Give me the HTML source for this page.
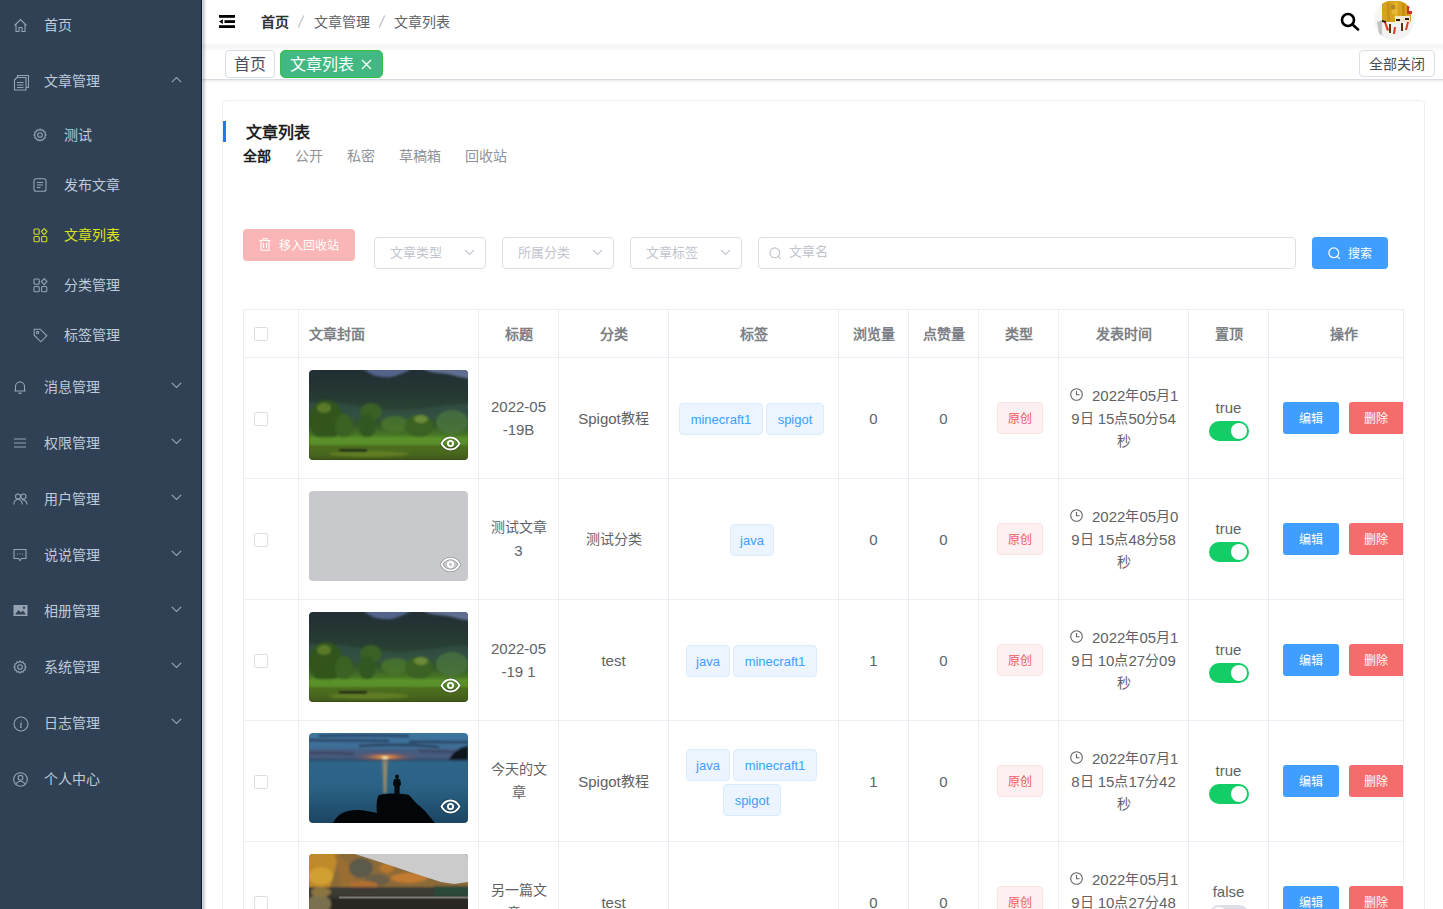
<!DOCTYPE html>
<html lang="zh-CN">
<head>
<meta charset="utf-8">
<style>
*{box-sizing:border-box;margin:0;padding:0}
html,body{width:1443px;height:909px;overflow:hidden;background:#fff}
body{font-family:"Liberation Sans",sans-serif;font-size:14px;color:#606266;position:relative}
.abs{position:absolute}
svg{display:block}
/* sidebar */
#side{position:absolute;left:0;top:0;width:201px;height:909px;background:#304156}
#sideline{position:absolute;left:201px;top:0;width:1px;height:909px;background:#0a1e38}
#sideshadow{position:absolute;left:202px;top:0;width:6px;height:909px;background:linear-gradient(90deg,rgba(0,0,0,.15) 0,rgba(0,0,0,.2) 1.5px,rgba(0,0,0,.12) 2.5px,rgba(0,0,0,.05) 3.5px,rgba(0,0,0,.015) 4.5px,rgba(0,0,0,0) 6px)}
.mi{position:absolute;left:0;width:201px;height:20px;color:#bfcbd9;font-size:14px;line-height:20px}
.mi .t{position:absolute;left:44px;top:0;white-space:nowrap;font-weight:500}
.mi .ic{position:absolute;left:13px;top:3px}
.mi.sub .t{left:64px}
.mi.sub .ic{left:33px}
.mi .ch{position:absolute;left:171px;top:5px}
.mi.act{color:#dbe41c}
.mi .ic,.mi .ch{color:#97a3b2}
.mi.act .ic{color:#d2dc22}
/* header */
#hdr{position:absolute;left:202px;top:0;width:1241px;height:46px;background:#fff}
#hdrsh{position:absolute;left:202px;top:43px;width:1241px;height:8px;background:linear-gradient(180deg,rgba(0,10,30,0) 0,rgba(0,10,30,.03) 2px,rgba(0,10,30,.045) 3px,rgba(0,10,30,.03) 5px,rgba(0,10,30,0) 8px)}
#tags{position:absolute;left:202px;top:46px;width:1241px;height:34px;background:#fff;border-bottom:1px solid #d8dce5}
#tagsh{position:absolute;left:202px;top:80px;width:1241px;height:3px;background:linear-gradient(180deg,#ececec,#fff)}
.bc{position:absolute;top:13px;font-size:14px;line-height:18px;color:#606266;white-space:nowrap}
/* card */
#card{position:absolute;left:222px;top:100px;width:1203px;height:830px;border:1px solid #ebeef5;border-radius:4px;background:#fff}
.sel{position:absolute;top:237px;width:112px;height:32px;border:1px solid #dcdfe6;border-radius:4px;background:#fff}
.sel .p{position:absolute;left:15px;top:6px;font-size:13px;line-height:18px;color:#c0c4cc}
.sel svg{position:absolute;left:89px;top:11px}
/* table */
#tbl{position:absolute;left:243px;top:309px;width:1161px;height:620px;border-left:1px solid #ebeef5;border-top:1px solid #ebeef5;border-right:1px solid #ebeef5;overflow:hidden}
.vl{position:absolute;top:309px;width:1px;height:600px;background:#ebeef5}
.hl{position:absolute;left:243px;width:1161px;height:1px;background:#ebeef5}
.th{position:absolute;top:325px;font-weight:bold;font-size:14px;line-height:18px;color:#606266;white-space:nowrap}
.cb{position:absolute;left:254px;width:14px;height:14px;border:1px solid #dcdfe6;border-radius:2px;background:#fff}
.cell{position:absolute;text-align:center;font-size:14px;line-height:23px;color:#606266}
.tag{position:absolute;height:32px;border:1px solid #d9ecff;background:#ecf5ff;color:#409eff;border-radius:4px;font-size:12px;line-height:30px;text-align:center;white-space:nowrap}
.ytag{position:absolute;left:997px;width:46px;height:32px;border:1px solid #fde2e2;background:#fef0f0;color:#f25858;border-radius:4px;font-size:12px;line-height:32px;text-align:center}
.sw{position:absolute;left:1209px;width:40px;height:20px;border-radius:10px;background:#13ce66}
.sw:after{content:"";position:absolute;right:2px;top:2px;width:16px;height:16px;border-radius:8px;background:#fff}
.btn{position:absolute;height:32px;width:56px;border-radius:3px;color:#fff;font-size:12px;line-height:34px;text-align:center}
.bp{left:1283px;background:#409eff}
.bd{left:1349px;width:54px;background:#f56c6c;border-radius:3px 0 0 3px}
.img{position:absolute;left:309px;width:159px;height:90px;border-radius:4px;overflow:hidden}
.sw.off{background:#dcdfe6}.sw.off:after{right:auto;left:2px}
.img.gray{background:#c8c9cc}
.eye{position:absolute;left:131px;top:66px}

.l{font-size:15px;line-height:16px;vertical-align:-1px}
.th{color:#7c7f85}
.tag{font-size:13px;line-height:32px}
</style>
</head>
<body>
<div id="side"></div>
<div class="mi" style="top:15px"><svg class="ic" width="15" height="15" viewBox="0 0 15 15" fill="none" stroke="currentColor" stroke-width="1.1" ><path d="M1.5 7.5 L7.5 1.5 L13.5 7.5 M3 6 V13.5 H6 V9.5 H9 V13.5 H12 V6"/></svg><span class="t">首页</span></div>
<div class="mi" style="top:71px"><svg class="ic" width="17" height="17" viewBox="0 0 17 17" fill="none" stroke="currentColor" stroke-width="1.1" ><path d="M4.5 3.5 V1.5 H15.5 V13.5 H13"/><path d="M1.5 6 L4 3.5 H13 V16 H1.5 Z"/><path d="M4 8.5 H10.5 M4 11 H10.5 M4 13.5 H10.5"/></svg><span class="t">文章管理</span><svg class="ch" width="11" height="7" viewBox="0 0 11 7" fill="none" stroke="currentColor" stroke-width="1.1"><path d="M0.8 6.2 L5.5 1.5 L10.2 6.2"/></svg></div>
<div class="mi sub" style="top:125px"><svg class="ic" width="14" height="14" viewBox="0 0 14 14" fill="none" stroke="currentColor" stroke-width="1.1" ><circle cx="7" cy="7" r="2.3"/><path d="M7 1 L8.3 2.3 L10 1.9 L10.6 3.6 L12.3 4.2 L11.9 5.9 L13 7 L11.9 8.1 L12.3 9.8 L10.6 10.4 L10 12.1 L8.3 11.7 L7 13 L5.7 11.7 L4 12.1 L3.4 10.4 L1.7 9.8 L2.1 8.1 L1 7 L2.1 5.9 L1.7 4.2 L3.4 3.6 L4 1.9 L5.7 2.3 Z"/></svg><span class="t">测试</span></div>
<div class="mi sub" style="top:175px"><svg class="ic" width="14" height="14" viewBox="0 0 14 14" fill="none" stroke="currentColor" stroke-width="1.1" ><rect x="1" y="0.8" width="12" height="12.4" rx="2"/><path d="M4 4.5 H10 M4 7 H10 M4 9.5 H7.5"/></svg><span class="t">发布文章</span></div>
<div class="mi sub act" style="top:225px"><svg class="ic" width="15" height="15" viewBox="0 0 15 15" fill="none" stroke="currentColor" stroke-width="1.1" ><rect x="1" y="1" width="5.2" height="5.2" rx="1"/><rect x="1" y="8.5" width="5.2" height="5.2" rx="1"/><rect x="8.6" y="8.5" width="5.2" height="5.2" rx="1"/><path d="M11.2 0.6 L14 3.6 L11.2 6.6 L8.4 3.6 Z"/></svg><span class="t">文章列表</span></div>
<div class="mi sub" style="top:275px"><svg class="ic" width="15" height="15" viewBox="0 0 15 15" fill="none" stroke="currentColor" stroke-width="1.1" ><rect x="1" y="1" width="5.2" height="5.2" rx="1"/><rect x="1" y="8.5" width="5.2" height="5.2" rx="1"/><rect x="8.6" y="8.5" width="5.2" height="5.2" rx="1"/><path d="M11.2 0.6 L14 3.6 L11.2 6.6 L8.4 3.6 Z"/></svg><span class="t">分类管理</span></div>
<div class="mi sub" style="top:325px"><svg class="ic" width="15" height="15" viewBox="0 0 15 15" fill="none" stroke="currentColor" stroke-width="1.1" ><path d="M1.2 1.2 H7.2 L13.8 7.8 L7.8 13.8 L1.2 7.2 Z"/><circle cx="4.6" cy="4.6" r="1.2"/></svg><span class="t">标签管理</span></div>
<div class="mi" style="top:377px"><svg class="ic" width="14" height="14" viewBox="0 0 14 14" fill="none" stroke="currentColor" stroke-width="1.1" ><path d="M2.5 11 V6.5 A4.5 4.5 0 0 1 11.5 6.5 V11 Z M1.2 11 H12.8 M5.5 12.5 A1.6 1.6 0 0 0 8.5 12.5 M7 1 V2"/></svg><span class="t">消息管理</span><svg class="ch" width="11" height="7" viewBox="0 0 11 7" fill="none" stroke="currentColor" stroke-width="1.1"><path d="M0.8 0.8 L5.5 5.5 L10.2 0.8"/></svg></div>
<div class="mi" style="top:433px"><svg class="ic" width="14" height="14" viewBox="0 0 14 14" fill="none" stroke="currentColor" stroke-width="1.1" ><path d="M1 3 H13 M1 7 H13 M1 11 H13"/></svg><span class="t">权限管理</span><svg class="ch" width="11" height="7" viewBox="0 0 11 7" fill="none" stroke="currentColor" stroke-width="1.1"><path d="M0.8 0.8 L5.5 5.5 L10.2 0.8"/></svg></div>
<div class="mi" style="top:489px"><svg class="ic" width="15" height="14" viewBox="0 0 15 14" fill="none" stroke="currentColor" stroke-width="1.1" ><circle cx="5" cy="4.5" r="2.5"/><circle cx="10.5" cy="4.5" r="2.5"/><path d="M0.8 12.5 C1 9 3 7.5 5 7.5 C7 7.5 9 9 9.2 12.5 M9 7.6 C11 7.5 13.8 9 14.2 12.5"/></svg><span class="t">用户管理</span><svg class="ch" width="11" height="7" viewBox="0 0 11 7" fill="none" stroke="currentColor" stroke-width="1.1"><path d="M0.8 0.8 L5.5 5.5 L10.2 0.8"/></svg></div>
<div class="mi" style="top:545px"><svg class="ic" width="14" height="14" viewBox="0 0 14 14" fill="none" stroke="currentColor" stroke-width="1.1" ><path d="M1 1.5 H13 V10.5 H8.5 L7 12.5 L5.5 10.5 H1 Z"/><path d="M4 6 H4.6 M6.7 6 H7.3 M9.4 6 H10" stroke-width="1.4"/></svg><span class="t">说说管理</span><svg class="ch" width="11" height="7" viewBox="0 0 11 7" fill="none" stroke="currentColor" stroke-width="1.1"><path d="M0.8 0.8 L5.5 5.5 L10.2 0.8"/></svg></div>
<div class="mi" style="top:601px"><svg class="ic" width="15" height="14" viewBox="0 0 15 14"><rect x="0.5" y="1" width="14" height="11" fill="currentColor"/><path d="M2 10.5 L5.5 6 L8 8.5 L10 6.5 L13 10.5 Z" fill="#304156"/><circle cx="11" cy="3.8" r="1.2" fill="#304156"/></svg><span class="t">相册管理</span><svg class="ch" width="11" height="7" viewBox="0 0 11 7" fill="none" stroke="currentColor" stroke-width="1.1"><path d="M0.8 0.8 L5.5 5.5 L10.2 0.8"/></svg></div>
<div class="mi" style="top:657px"><svg class="ic" width="14" height="14" viewBox="0 0 14 14" fill="none" stroke="currentColor" stroke-width="1.1" ><circle cx="7" cy="7" r="2.3"/><path d="M7 1 L8.3 2.3 L10 1.9 L10.6 3.6 L12.3 4.2 L11.9 5.9 L13 7 L11.9 8.1 L12.3 9.8 L10.6 10.4 L10 12.1 L8.3 11.7 L7 13 L5.7 11.7 L4 12.1 L3.4 10.4 L1.7 9.8 L2.1 8.1 L1 7 L2.1 5.9 L1.7 4.2 L3.4 3.6 L4 1.9 L5.7 2.3 Z"/></svg><span class="t">系统管理</span><svg class="ch" width="11" height="7" viewBox="0 0 11 7" fill="none" stroke="currentColor" stroke-width="1.1"><path d="M0.8 0.8 L5.5 5.5 L10.2 0.8"/></svg></div>
<div class="mi" style="top:713px"><svg class="ic" width="16" height="16" viewBox="0 0 16 16" fill="none" stroke="currentColor" stroke-width="1.1" ><circle cx="8" cy="8" r="7"/><path d="M8.2 4.8 V5.3 M7.2 7.2 H8.3 L7.6 11.4 H8.6"/></svg><span class="t">日志管理</span><svg class="ch" width="11" height="7" viewBox="0 0 11 7" fill="none" stroke="currentColor" stroke-width="1.1"><path d="M0.8 0.8 L5.5 5.5 L10.2 0.8"/></svg></div>
<div class="mi" style="top:769px"><svg class="ic" width="15" height="15" viewBox="0 0 15 15" fill="none" stroke="currentColor" stroke-width="1.1" ><circle cx="7.5" cy="7.5" r="6.8"/><circle cx="7.5" cy="5.8" r="2.4"/><path d="M3.2 12.4 C4 10 5.5 9.2 7.5 9.2 C9.5 9.2 11 10 11.8 12.4"/></svg><span class="t">个人中心</span></div>

<div id="hdr"></div>
<svg class="abs" style="left:219px;top:15px" width="17" height="14" viewBox="0 0 17 14"><rect x="0" y="0" width="16" height="2.8" fill="#000"/><rect x="5.5" y="5.2" width="10.5" height="2.8" fill="#000"/><rect x="0" y="10.2" width="16" height="2.8" fill="#000"/><path d="M0 6.6 L3.8 4.3 V8.9 Z" fill="#000"/></svg>
<div class="bc" style="left:261px;font-weight:bold;color:#303133">首页</div>
<svg class="abs" style="left:297px;top:15px" width="8" height="13"><path d="M6.8 0.5 L1.2 12.5" stroke="#c0c4cc" stroke-width="1.3"/></svg>
<div class="bc" style="left:314px">文章管理</div>
<svg class="abs" style="left:378px;top:15px" width="8" height="13"><path d="M6.8 0.5 L1.2 12.5" stroke="#c0c4cc" stroke-width="1.3"/></svg>
<div class="bc" style="left:394px">文章列表</div>
<svg class="abs" style="left:1340px;top:12px" width="20" height="19" viewBox="0 0 20 19" fill="none" stroke="#000" stroke-width="2.6"><circle cx="8" cy="8" r="6"/><path d="M12.5 12.5 L18 17.5" stroke-linecap="round"/></svg>
<div class="abs" id="avatar" style="left:1374px;top:0px;width:40px;height:40px;border-radius:20px;overflow:hidden;background:#fafafa">
<svg width="40" height="40" viewBox="0 0 40 40">
<defs><filter id="avb"><feGaussianBlur stdDeviation="0.5"/></filter></defs>
<g filter="url(#avb)">
<rect x="0" y="0" width="40" height="40" fill="#f6f6f6"/>
<path d="M3 22 L8 20 L9 36 L5 34 Z" fill="#c4c4c4"/>
<rect x="8" y="1" width="29" height="22" rx="3" fill="#d7a31a"/>
<rect x="13" y="3" width="3" height="18" fill="#c89414"/><rect x="20" y="2" width="4" height="16" fill="#e6b22a"/><rect x="28" y="3" width="3" height="16" fill="#c89010"/>
<rect x="17" y="5" width="4" height="4" fill="#b4822a"/><rect x="18" y="10" width="5" height="4" fill="#e8b838"/>
<rect x="33" y="6" width="5" height="8" fill="#c83020"/><rect x="35" y="8" width="3" height="3" fill="#f4f4f4"/>
<rect x="21" y="16" width="15" height="8" fill="#f2e4d2"/>
<rect x="22" y="19" width="4" height="2" fill="#2a1a10"/><rect x="31" y="18" width="4" height="2" fill="#2a1a10"/>
<rect x="8" y="22" width="30" height="18" fill="#f2f2f2"/>
<path d="M10 22 L13 31 L15 30 L12 22 Z" fill="#e03a20"/>
<path d="M20 27 L19 34 L21 34 L22 27 Z" fill="#d83a20"/>
<path d="M33 22 L31 30 L33 30 L35 22 Z" fill="#e03a20"/>
<rect x="15" y="24" width="2" height="9" fill="#5a3810"/><rect x="27" y="23" width="2" height="8" fill="#5a3810"/>
<path d="M8 20 L12 21 L12 23 L8 22 Z" fill="#2a1a10"/>
</g>
</svg></div>
<div id="tags"></div>
<div class="abs" style="left:225px;top:50px;width:50px;height:28px;border:1px solid #d8dce5;border-radius:4px;background:#fff;font-size:16px;line-height:28px;color:#495060;text-align:center">首页</div>
<div class="abs" style="left:280px;top:50px;width:103px;height:28px;border:1px solid #36bf45;border-radius:5px;background:#42b983;font-size:16px;line-height:28px;color:#fff;padding-left:9px;white-space:nowrap">文章列表<svg style="position:absolute;left:80px;top:8px" width="11" height="11" viewBox="0 0 11 11" stroke="#fff" stroke-width="1.3"><path d="M1 1 L10 10 M10 1 L1 10"/></svg></div>
<div class="abs" style="left:1359px;top:50px;width:76px;height:27px;border:1px solid #dcdfe6;border-radius:4px;background:#fff;font-size:14px;line-height:27px;color:#4a4d52;text-align:center">全部关闭</div>
<div id="tagsh"></div>
<div id="hdrsh"></div>

<div id="card"></div>
<div class="abs" style="left:223px;top:121px;width:3px;height:21px;background:#1a7cf5"></div>
<div class="abs" style="left:246px;top:122px;font-size:16px;line-height:22px;font-weight:bold;color:#1f1f1f">文章列表</div>
<div class="abs" style="left:243px;top:146px;font-size:14px;line-height:20px;font-weight:bold;color:#1f1f1f">全部</div>
<div class="abs" style="left:295px;top:146px;font-size:14px;line-height:20px;color:#909399">公开</div>
<div class="abs" style="left:347px;top:146px;font-size:14px;line-height:20px;color:#909399">私密</div>
<div class="abs" style="left:399px;top:146px;font-size:14px;line-height:20px;color:#909399">草稿箱</div>
<div class="abs" style="left:465px;top:146px;font-size:14px;line-height:20px;color:#909399">回收站</div>
<div class="abs" style="left:243px;top:229px;width:112px;height:32px;border-radius:4px;background:#fab6b6"></div>
<svg class="abs" style="left:259px;top:238px" width="12" height="13" viewBox="0 0 12 13" fill="none" stroke="#fff" stroke-width="1.1"><path d="M0.5 2.5 H11.5 M4 2.5 V0.8 H8 V2.5 M2 2.5 V12.2 H10 V2.5 M4.5 5 V10 M7.5 5 V10"/></svg>
<div class="abs" style="left:279px;top:237px;font-size:12px;line-height:18px;color:#fff">移入回收站</div>
<div class="sel" style="left:374px"><span class="p">文章类型</span><svg width="11" height="7" viewBox="0 0 11 7" fill="none" stroke="#c0c4cc" stroke-width="1.1"><path d="M0.8 0.8 L5.5 5.5 L10.2 0.8"/></svg></div>
<div class="sel" style="left:502px"><span class="p">所属分类</span><svg width="11" height="7" viewBox="0 0 11 7" fill="none" stroke="#c0c4cc" stroke-width="1.1"><path d="M0.8 0.8 L5.5 5.5 L10.2 0.8"/></svg></div>
<div class="sel" style="left:630px"><span class="p">文章标签</span><svg width="11" height="7" viewBox="0 0 11 7" fill="none" stroke="#c0c4cc" stroke-width="1.1"><path d="M0.8 0.8 L5.5 5.5 L10.2 0.8"/></svg></div>
<div class="abs" style="left:758px;top:237px;width:538px;height:32px;border:1px solid #dcdfe6;border-radius:4px;background:#fff"></div>
<svg class="abs" style="left:769px;top:247px" width="13" height="13" viewBox="0 0 13 13" fill="none" stroke="#c0c4cc" stroke-width="1.1"><circle cx="5.8" cy="5.8" r="4.9"/><path d="M9.3 9.3 L11.8 11.8"/></svg>
<div class="abs" style="left:789px;top:243px;font-size:13px;line-height:18px;color:#c0c4cc">文章名</div>
<div class="abs" style="left:1312px;top:237px;width:76px;height:32px;border-radius:4px;background:#409eff"></div>
<svg class="abs" style="left:1328px;top:247px" width="13" height="13" viewBox="0 0 13 13" fill="none" stroke="#fff" stroke-width="1.2"><circle cx="5.8" cy="5.8" r="4.9"/><path d="M9.3 9.3 L11.8 11.8"/></svg>
<div class="abs" style="left:1348px;top:245px;font-size:12px;line-height:18px;color:#fff">搜索</div>
<div class="vl" style="left:243px"></div>
<div class="vl" style="left:298px"></div>
<div class="vl" style="left:478px"></div>
<div class="vl" style="left:558px"></div>
<div class="vl" style="left:668px"></div>
<div class="vl" style="left:838px"></div>
<div class="vl" style="left:908px"></div>
<div class="vl" style="left:978px"></div>
<div class="vl" style="left:1058px"></div>
<div class="vl" style="left:1188px"></div>
<div class="vl" style="left:1268px"></div>
<div class="vl" style="left:1403px"></div>
<div class="hl" style="top:309px"></div>
<div class="hl" style="top:357px"></div>
<div class="hl" style="top:478px"></div>
<div class="hl" style="top:599px"></div>
<div class="hl" style="top:720px"></div>
<div class="hl" style="top:841px"></div>
<div class="cb" style="top:327px"></div>
<div class="th" style="left:309px">文章封面</div>
<div class="th" style="left:479px;width:79px;text-align:center">标题</div>
<div class="th" style="left:559px;width:109px;text-align:center">分类</div>
<div class="th" style="left:669px;width:169px;text-align:center">标签</div>
<div class="th" style="left:839px;width:69px;text-align:center">浏览量</div>
<div class="th" style="left:909px;width:69px;text-align:center">点赞量</div>
<div class="th" style="left:979px;width:79px;text-align:center">类型</div>
<div class="th" style="left:1059px;width:129px;text-align:center">发表时间</div>
<div class="th" style="left:1189px;width:79px;text-align:center">置顶</div>
<div class="th" style="left:1269px;width:149px;text-align:center">操作</div>
<div class="cb" style="top:412px"></div>
<div class="img g1" style="top:370px"><svg width="159" height="90" viewBox="0 0 159 90">
<defs><filter id="bl1" x="-10%" y="-10%" width="120%" height="120%"><feGaussianBlur stdDeviation="1.3"/></filter>
<linearGradient id="g1a" x1="0" y1="0" x2="0" y2="1"><stop offset="0" stop-color="#222e34"/><stop offset=".3" stop-color="#263a33"/><stop offset=".48" stop-color="#2c4634"/><stop offset=".62" stop-color="#35582a"/><stop offset=".76" stop-color="#4f8224"/><stop offset=".84" stop-color="#4a6e1e"/><stop offset=".92" stop-color="#405a1a"/><stop offset="1" stop-color="#2a3616"/></linearGradient></defs>
<rect width="159" height="90" fill="url(#g1a)"/>
<g filter="url(#bl1)">
<path d="M54 -2 C60 5 70 8 82 7 C92 5 98 1 104 -2 Z" fill="#52648a"/>
<path d="M112 -2 C118 2 128 3 138 4 C148 6 154 8 162 9 V-2 Z" fill="#5e6e90"/>
<path d="M0 32 C30 30 60 40 90 40 C120 40 140 32 162 34 V50 H0 Z" fill="#36584e" opacity=".5"/>
<ellipse cx="17" cy="50" rx="17" ry="20" fill="#30541e"/>
<ellipse cx="15" cy="38" rx="7" ry="5" fill="#5a7a2c"/>
<ellipse cx="35" cy="56" rx="9" ry="12" fill="#3a6224"/>
<ellipse cx="62" cy="42" rx="11" ry="9" fill="#3a6026"/>
<ellipse cx="58" cy="56" rx="8" ry="12" fill="#335820"/>
<ellipse cx="86" cy="54" rx="14" ry="8" fill="#4c7a2c" opacity=".75"/>
<ellipse cx="110" cy="56" rx="14" ry="11" fill="#3a6222"/>
<ellipse cx="112" cy="49" rx="7" ry="4" fill="#6a8a38"/>
<ellipse cx="143" cy="52" rx="16" ry="12" fill="#4a7440" opacity=".8"/>
<rect x="0" y="67" width="159" height="8" fill="#5c9428" opacity=".85"/>
<rect x="0" y="77" width="159" height="13" fill="#50701e" opacity=".6"/>
<ellipse cx="60" cy="84" rx="40" ry="3" fill="#76922e" opacity=".55"/>
<rect x="30" y="79" width="28" height="3" fill="#1c2214"/>
</g>
</svg>
<svg class="eye" width="21" height="15" viewBox="0 0 21 15"><path d="M1.5 7.5 C4 3 7 1.5 10.5 1.5 C14 1.5 17 3 19.5 7.5 C17 12 14 13.5 10.5 13.5 C7 13.5 4 12 1.5 7.5 Z" fill="none" stroke="#000" stroke-opacity=".35" stroke-width="3.2"/><path d="M1.5 7.5 C4 3 7 1.5 10.5 1.5 C14 1.5 17 3 19.5 7.5 C17 12 14 13.5 10.5 13.5 C7 13.5 4 12 1.5 7.5 Z" fill="none" stroke="#fff" stroke-width="1.8"/><circle cx="10.5" cy="7.5" r="2.6" fill="none" stroke="#fff" stroke-width="1.8"/></svg></div>
<div class="cell" style="left:479px;width:79px;top:395.0px"><span class="l">2022-05</span><br><span class="l">-19B</span></div>
<div class="cell" style="left:559px;width:109px;top:406.5px"><span class="l">Spigot</span>教程</div>
<div class="tag" style="left:679px;top:403px;width:84px">minecraft1</div>
<div class="tag" style="left:766px;top:403px;width:58px">spigot</div>
<div class="cell" style="left:839px;width:69px;top:406.5px"><span class="l">0</span></div>
<div class="cell" style="left:909px;width:69px;top:406.5px"><span class="l">0</span></div>
<div class="ytag" style="top:402px">原创</div>
<svg class="abs" style="left:1070px;top:388px" width="13" height="13" viewBox="0 0 13 13" fill="none" stroke="#606266" stroke-width="1.1"><circle cx="6.5" cy="6.5" r="5.8"/><path d="M6.5 3 V6.8 H9.5"/></svg>
<div class="cell" style="left:1089px;width:99px;top:383.5px;text-align:left;padding-left:3px"><span class="l">2022</span>年<span class="l">05</span>月<span class="l">1</span></div>
<div class="cell" style="left:1059px;width:129px;top:406.5px"><span class="l">9</span>日<span class="l"> 15</span>点<span class="l">50</span>分<span class="l">54</span></div>
<div class="cell" style="left:1059px;width:129px;top:429.5px">秒</div>
<div class="cell" style="left:1189px;width:79px;top:396px"><span class="l">true</span></div>
<div class="sw" style="top:421px"></div>
<div class="btn bp" style="top:402px">编辑</div>
<div class="btn bd" style="top:402px">删除</div>
<div class="cb" style="top:533px"></div>
<div class="img gray" style="top:491px"><svg class="eye" width="21" height="15" viewBox="0 0 21 15"><path d="M1.5 7.5 C4 3 7 1.5 10.5 1.5 C14 1.5 17 3 19.5 7.5 C17 12 14 13.5 10.5 13.5 C7 13.5 4 12 1.5 7.5 Z" fill="none" stroke="#000" stroke-opacity=".35" stroke-width="3.2"/><path d="M1.5 7.5 C4 3 7 1.5 10.5 1.5 C14 1.5 17 3 19.5 7.5 C17 12 14 13.5 10.5 13.5 C7 13.5 4 12 1.5 7.5 Z" fill="none" stroke="#fff" stroke-width="1.8"/><circle cx="10.5" cy="7.5" r="2.6" fill="none" stroke="#fff" stroke-width="1.8"/></svg></div>
<div class="cell" style="left:479px;width:79px;top:516.0px">测试文章<br><span class="l">3</span></div>
<div class="cell" style="left:559px;width:109px;top:527.5px">测试分类</div>
<div class="tag" style="left:730px;top:524px;width:44px">java</div>
<div class="cell" style="left:839px;width:69px;top:527.5px"><span class="l">0</span></div>
<div class="cell" style="left:909px;width:69px;top:527.5px"><span class="l">0</span></div>
<div class="ytag" style="top:523px">原创</div>
<svg class="abs" style="left:1070px;top:509px" width="13" height="13" viewBox="0 0 13 13" fill="none" stroke="#606266" stroke-width="1.1"><circle cx="6.5" cy="6.5" r="5.8"/><path d="M6.5 3 V6.8 H9.5"/></svg>
<div class="cell" style="left:1089px;width:99px;top:504.5px;text-align:left;padding-left:3px"><span class="l">2022</span>年<span class="l">05</span>月<span class="l">0</span></div>
<div class="cell" style="left:1059px;width:129px;top:527.5px"><span class="l">9</span>日<span class="l"> 15</span>点<span class="l">48</span>分<span class="l">58</span></div>
<div class="cell" style="left:1059px;width:129px;top:550.5px">秒</div>
<div class="cell" style="left:1189px;width:79px;top:517px"><span class="l">true</span></div>
<div class="sw" style="top:542px"></div>
<div class="btn bp" style="top:523px">编辑</div>
<div class="btn bd" style="top:523px">删除</div>
<div class="cb" style="top:654px"></div>
<div class="img g1" style="top:612px"><svg width="159" height="90" viewBox="0 0 159 90">
<defs><filter id="bl1" x="-10%" y="-10%" width="120%" height="120%"><feGaussianBlur stdDeviation="1.3"/></filter>
<linearGradient id="g1a" x1="0" y1="0" x2="0" y2="1"><stop offset="0" stop-color="#222e34"/><stop offset=".3" stop-color="#263a33"/><stop offset=".48" stop-color="#2c4634"/><stop offset=".62" stop-color="#35582a"/><stop offset=".76" stop-color="#4f8224"/><stop offset=".84" stop-color="#4a6e1e"/><stop offset=".92" stop-color="#405a1a"/><stop offset="1" stop-color="#2a3616"/></linearGradient></defs>
<rect width="159" height="90" fill="url(#g1a)"/>
<g filter="url(#bl1)">
<path d="M54 -2 C60 5 70 8 82 7 C92 5 98 1 104 -2 Z" fill="#52648a"/>
<path d="M112 -2 C118 2 128 3 138 4 C148 6 154 8 162 9 V-2 Z" fill="#5e6e90"/>
<path d="M0 32 C30 30 60 40 90 40 C120 40 140 32 162 34 V50 H0 Z" fill="#36584e" opacity=".5"/>
<ellipse cx="17" cy="50" rx="17" ry="20" fill="#30541e"/>
<ellipse cx="15" cy="38" rx="7" ry="5" fill="#5a7a2c"/>
<ellipse cx="35" cy="56" rx="9" ry="12" fill="#3a6224"/>
<ellipse cx="62" cy="42" rx="11" ry="9" fill="#3a6026"/>
<ellipse cx="58" cy="56" rx="8" ry="12" fill="#335820"/>
<ellipse cx="86" cy="54" rx="14" ry="8" fill="#4c7a2c" opacity=".75"/>
<ellipse cx="110" cy="56" rx="14" ry="11" fill="#3a6222"/>
<ellipse cx="112" cy="49" rx="7" ry="4" fill="#6a8a38"/>
<ellipse cx="143" cy="52" rx="16" ry="12" fill="#4a7440" opacity=".8"/>
<rect x="0" y="67" width="159" height="8" fill="#5c9428" opacity=".85"/>
<rect x="0" y="77" width="159" height="13" fill="#50701e" opacity=".6"/>
<ellipse cx="60" cy="84" rx="40" ry="3" fill="#76922e" opacity=".55"/>
<rect x="30" y="79" width="28" height="3" fill="#1c2214"/>
</g>
</svg>
<svg class="eye" width="21" height="15" viewBox="0 0 21 15"><path d="M1.5 7.5 C4 3 7 1.5 10.5 1.5 C14 1.5 17 3 19.5 7.5 C17 12 14 13.5 10.5 13.5 C7 13.5 4 12 1.5 7.5 Z" fill="none" stroke="#000" stroke-opacity=".35" stroke-width="3.2"/><path d="M1.5 7.5 C4 3 7 1.5 10.5 1.5 C14 1.5 17 3 19.5 7.5 C17 12 14 13.5 10.5 13.5 C7 13.5 4 12 1.5 7.5 Z" fill="none" stroke="#fff" stroke-width="1.8"/><circle cx="10.5" cy="7.5" r="2.6" fill="none" stroke="#fff" stroke-width="1.8"/></svg></div>
<div class="cell" style="left:479px;width:79px;top:637.0px"><span class="l">2022-05</span><br><span class="l">-19 1</span></div>
<div class="cell" style="left:559px;width:109px;top:648.5px"><span class="l">test</span></div>
<div class="tag" style="left:686px;top:645px;width:44px">java</div>
<div class="tag" style="left:733px;top:645px;width:84px">minecraft1</div>
<div class="cell" style="left:839px;width:69px;top:648.5px"><span class="l">1</span></div>
<div class="cell" style="left:909px;width:69px;top:648.5px"><span class="l">0</span></div>
<div class="ytag" style="top:644px">原创</div>
<svg class="abs" style="left:1070px;top:630px" width="13" height="13" viewBox="0 0 13 13" fill="none" stroke="#606266" stroke-width="1.1"><circle cx="6.5" cy="6.5" r="5.8"/><path d="M6.5 3 V6.8 H9.5"/></svg>
<div class="cell" style="left:1089px;width:99px;top:625.5px;text-align:left;padding-left:3px"><span class="l">2022</span>年<span class="l">05</span>月<span class="l">1</span></div>
<div class="cell" style="left:1059px;width:129px;top:648.5px"><span class="l">9</span>日<span class="l"> 10</span>点<span class="l">27</span>分<span class="l">09</span></div>
<div class="cell" style="left:1059px;width:129px;top:671.5px">秒</div>
<div class="cell" style="left:1189px;width:79px;top:638px"><span class="l">true</span></div>
<div class="sw" style="top:663px"></div>
<div class="btn bp" style="top:644px">编辑</div>
<div class="btn bd" style="top:644px">删除</div>
<div class="cb" style="top:775px"></div>
<div class="img sea" style="top:733px"><svg width="159" height="90" viewBox="0 0 159 90">
<defs><filter id="bl2" x="-10%" y="-10%" width="120%" height="120%"><feGaussianBlur stdDeviation="0.9"/></filter>
<linearGradient id="sa" x1="0" y1="0" x2="0" y2="1"><stop offset="0" stop-color="#3c76a0"/><stop offset=".25" stop-color="#3f6890"/><stop offset=".3" stop-color="#2e668a"/><stop offset=".6" stop-color="#2a6184"/><stop offset="1" stop-color="#1c4662"/></linearGradient>
<radialGradient id="sun" cx=".5" cy=".5" r=".5"><stop offset="0" stop-color="#ffd890"/><stop offset=".2" stop-color="#e08a3a"/><stop offset=".6" stop-color="#8a5a5a" stop-opacity=".6"/><stop offset="1" stop-color="#6a5a70" stop-opacity="0"/></radialGradient></defs>
<rect width="159" height="90" fill="url(#sa)"/>
<g filter="url(#bl2)">
<path d="M10 3 C40 2 70 2 100 3 M0 7 C30 8 50 7 80 8 M50 13 C80 11 110 12 130 14 M100 9 C120 8 140 10 159 9 M0 20 C20 19 30 20 45 21 M110 18 C130 18 145 19 159 20" stroke="#23344c" stroke-width="2" fill="none" opacity=".85"/>
<rect x="0" y="16" width="159" height="11" fill="#4e4a66" opacity=".45"/>
<ellipse cx="76" cy="24" rx="34" ry="5" fill="url(#sun)"/>
<ellipse cx="76" cy="25" rx="3" ry="1.5" fill="#ffe8b0"/>
<path d="M140 27 C143 20 150 15 159 13 V27 Z" fill="#0c141c"/>
<rect x="0" y="26.5" width="159" height="1.2" fill="#2a3e58"/>
<path d="M73.5 28 H78.5 L77.5 60 H74.5 Z" fill="#d6a060" opacity=".6"/>
</g>
<path d="M24 90 C28 82 35 77 48 77 C56 77 62 79 68 80 C67 72 68 64 70 62 C78 60 92 60 100 62 C104 66 106 70 112 74 C118 80 122 85 126 90 Z" fill="#030608"/>
<circle cx="88" cy="43.5" r="1.9" fill="#06090c"/><path d="M85.5 61 L85.3 53 L84 52 L84.5 47.5 C85 46 86 45.5 88 45.5 C90 45.5 91 46 91.5 47.5 L92 52 L90.7 53 L90.5 61 Z" fill="#06090c"/>
</svg>
<svg class="eye" width="21" height="15" viewBox="0 0 21 15"><path d="M1.5 7.5 C4 3 7 1.5 10.5 1.5 C14 1.5 17 3 19.5 7.5 C17 12 14 13.5 10.5 13.5 C7 13.5 4 12 1.5 7.5 Z" fill="none" stroke="#000" stroke-opacity=".35" stroke-width="3.2"/><path d="M1.5 7.5 C4 3 7 1.5 10.5 1.5 C14 1.5 17 3 19.5 7.5 C17 12 14 13.5 10.5 13.5 C7 13.5 4 12 1.5 7.5 Z" fill="none" stroke="#fff" stroke-width="1.8"/><circle cx="10.5" cy="7.5" r="2.6" fill="none" stroke="#fff" stroke-width="1.8"/></svg></div>
<div class="cell" style="left:479px;width:79px;top:758.0px">今天的文<br>章</div>
<div class="cell" style="left:559px;width:109px;top:769.5px"><span class="l">Spigot</span>教程</div>
<div class="tag" style="left:686px;top:749px;width:44px">java</div>
<div class="tag" style="left:733px;top:749px;width:84px">minecraft1</div>
<div class="tag" style="left:723px;top:784px;width:58px">spigot</div>
<div class="cell" style="left:839px;width:69px;top:769.5px"><span class="l">1</span></div>
<div class="cell" style="left:909px;width:69px;top:769.5px"><span class="l">0</span></div>
<div class="ytag" style="top:765px">原创</div>
<svg class="abs" style="left:1070px;top:751px" width="13" height="13" viewBox="0 0 13 13" fill="none" stroke="#606266" stroke-width="1.1"><circle cx="6.5" cy="6.5" r="5.8"/><path d="M6.5 3 V6.8 H9.5"/></svg>
<div class="cell" style="left:1089px;width:99px;top:746.5px;text-align:left;padding-left:3px"><span class="l">2022</span>年<span class="l">07</span>月<span class="l">1</span></div>
<div class="cell" style="left:1059px;width:129px;top:769.5px"><span class="l">8</span>日<span class="l"> 15</span>点<span class="l">17</span>分<span class="l">42</span></div>
<div class="cell" style="left:1059px;width:129px;top:792.5px">秒</div>
<div class="cell" style="left:1189px;width:79px;top:759px"><span class="l">true</span></div>
<div class="sw" style="top:784px"></div>
<div class="btn bp" style="top:765px">编辑</div>
<div class="btn bd" style="top:765px">删除</div>
<div class="cb" style="top:896px"></div>
<div class="img autumn" style="top:854px"><svg width="159" height="90" viewBox="0 0 159 90">
<defs><filter id="bl3" x="-10%" y="-10%" width="120%" height="120%"><feGaussianBlur stdDeviation="1.2"/></filter></defs>
<rect width="159" height="90" fill="#34322c"/>
<g filter="url(#bl3)">
<path d="M-2 -2 H162 V34 H-2 Z" fill="#8c6a38"/>
<path d="M-2 -2 H30 C28 10 25 20 20 36 H-2 Z" fill="#c08a2c"/>
<ellipse cx="12" cy="22" rx="12" ry="9" fill="#d0a030"/>
<path d="M28 0 C35 5 45 15 50 35 L30 36 C32 20 30 10 25 0 Z" fill="#9a6e30"/>
<ellipse cx="52" cy="14" rx="12" ry="10" fill="#5c5a4c"/>
<ellipse cx="68" cy="26" rx="12" ry="6" fill="#6a5e46"/>
<ellipse cx="78" cy="14" rx="7" ry="5" fill="#b8782e"/>
<ellipse cx="100" cy="24" rx="18" ry="5" fill="#c27c32"/>
<ellipse cx="55" cy="31" rx="14" ry="4" fill="#b07030"/>
<rect x="-2" y="33" width="164" height="9" fill="#3c3a34"/>
<rect x="125" y="32" width="37" height="10" fill="#2c4a38"/>
<rect x="-2" y="45" width="164" height="50" fill="#2a2824"/>
<ellipse cx="10" cy="50" rx="12" ry="10" fill="#7a7050"/>
<ellipse cx="12" cy="38" rx="10" ry="5" fill="#8c7440"/>
</g>
<path d="M46 0 L80 11 L110 21 L132 28 L145 30 L159 28 V0 Z" fill="#cbcbcb"/>
<rect x="30" y="42.5" width="129" height="2" fill="#7a7a74"/>
</svg>
<svg class="eye" width="21" height="15" viewBox="0 0 21 15"><path d="M1.5 7.5 C4 3 7 1.5 10.5 1.5 C14 1.5 17 3 19.5 7.5 C17 12 14 13.5 10.5 13.5 C7 13.5 4 12 1.5 7.5 Z" fill="none" stroke="#000" stroke-opacity=".35" stroke-width="3.2"/><path d="M1.5 7.5 C4 3 7 1.5 10.5 1.5 C14 1.5 17 3 19.5 7.5 C17 12 14 13.5 10.5 13.5 C7 13.5 4 12 1.5 7.5 Z" fill="none" stroke="#fff" stroke-width="1.8"/><circle cx="10.5" cy="7.5" r="2.6" fill="none" stroke="#fff" stroke-width="1.8"/></svg></div>
<div class="cell" style="left:479px;width:79px;top:879.0px">另一篇文<br>章<span class="l">1</span></div>
<div class="cell" style="left:559px;width:109px;top:890.5px"><span class="l">test</span></div>
<div class="cell" style="left:839px;width:69px;top:890.5px"><span class="l">0</span></div>
<div class="cell" style="left:909px;width:69px;top:890.5px"><span class="l">0</span></div>
<div class="ytag" style="top:886px">原创</div>
<svg class="abs" style="left:1070px;top:872px" width="13" height="13" viewBox="0 0 13 13" fill="none" stroke="#606266" stroke-width="1.1"><circle cx="6.5" cy="6.5" r="5.8"/><path d="M6.5 3 V6.8 H9.5"/></svg>
<div class="cell" style="left:1089px;width:99px;top:867.5px;text-align:left;padding-left:3px"><span class="l">2022</span>年<span class="l">05</span>月<span class="l">1</span></div>
<div class="cell" style="left:1059px;width:129px;top:890.5px"><span class="l">9</span>日<span class="l"> 10</span>点<span class="l">27</span>分<span class="l">48</span></div>
<div class="cell" style="left:1059px;width:129px;top:913.5px">秒</div>
<div class="cell" style="left:1189px;width:79px;top:880px"><span class="l">false</span></div>
<div class="sw off" style="top:905px"></div>
<div class="btn bp" style="top:886px">编辑</div>
<div class="btn bd" style="top:886px">删除</div>
<div id="sideline"></div>
<div id="sideshadow"></div>

</body>
</html>
